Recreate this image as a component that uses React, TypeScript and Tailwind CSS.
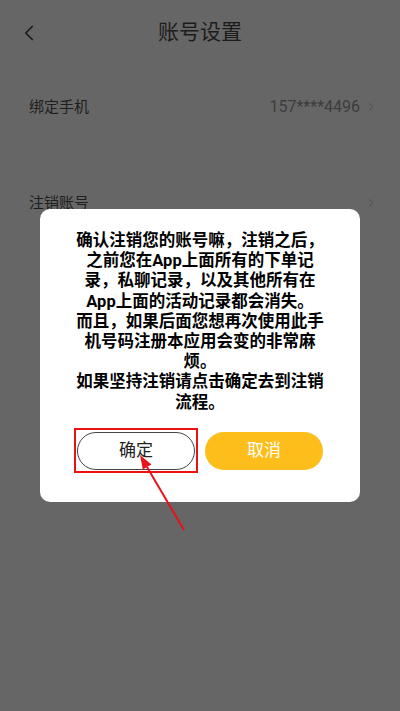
import { ChevronLeft, ChevronRight } from 'lucide-react';

const lines = [
  '确认注销您的账号嘛，注销之后，',
  '之前您在App上面所有的下单记',
  '录，私聊记录，以及其他所有在',
  'App上面的活动记录都会消失。',
  '而且，如果后面您想再次使用此手',
  '机号码注册本应用会变的非常麻',
  '烦。',
  '如果坚持注销请点击确定去到注销',
  '流程。',
];

export default function App() {
  return (
    <div
      className="relative h-[711px] w-[400px] overflow-hidden bg-[#666666]"
      style={{ fontFamily: 'Roboto, "Noto Sans CJK SC", sans-serif' }}
    >
      {/* header */}
      <div className="relative flex h-[66px] items-center justify-center">
        <ChevronLeft className="absolute left-[16px] top-[20px] h-[26px] w-[26px] text-[#1c1c1c]" strokeWidth={1.6} />
        <span className="text-[21px] text-[#1c1c1c]">账号设置</span>
      </div>

      {/* rows */}
      <div className="flex h-[82px] items-center justify-between pl-[29px] pr-[22px]">
        <span className="text-[15px] text-[#1e1e1e]">绑定手机</span>
        <div className="flex items-center gap-[4px]">
          <span className="text-[16px] text-[#3d3d3d]">157****4496</span>
          <ChevronRight className="h-[14px] w-[14px] text-[#4c4c4c]" strokeWidth={1.5} />
        </div>
      </div>
      <div className="mt-[14px] flex h-[82px] items-center justify-between pl-[29px] pr-[22px]">
        <span className="text-[15px] text-[#1e1e1e]">注销账号</span>
        <ChevronRight className="h-[14px] w-[14px] text-[#4c4c4c]" strokeWidth={1.5} />
      </div>

      {/* dialog */}
      <div className="absolute inset-0 flex items-center justify-center">
        <div className="flex h-[293px] w-[320px] flex-col rounded-[10px] bg-white pt-[22px]">
          <div className="text-center text-[16.5px] font-bold leading-[20.2px] text-black">
            {lines.map((l) => (
              <div key={l}>{l}</div>
            ))}
          </div>
          <div className="mt-[19px] flex gap-[10px] px-[37px]">
            <div className="relative flex-1">
              <button className="flex h-[38px] w-full items-center justify-center rounded-full border border-[#444444] text-[17px] text-[#222222]">
                确定
              </button>
              <div className="absolute -bottom-[3px] -left-[3px] -right-[3px] -top-[4px] border-[2.5px] border-[#ee1111]" />
            </div>
            <button className="flex h-[38px] flex-1 items-center justify-center rounded-full bg-[#fdbe1c] text-[17px] text-white">
              取消
            </button>
          </div>
        </div>
      </div>

      {/* annotation arrow */}
      <svg className="pointer-events-none absolute left-0 top-0" width="400" height="711">
        <line x1="184" y1="530" x2="147" y2="467" stroke="#e8121a" strokeWidth="2" />
        <polygon points="140,455 151.4,464.5 142.8,469.6" fill="#e8121a" />
      </svg>
    </div>
  );
}
